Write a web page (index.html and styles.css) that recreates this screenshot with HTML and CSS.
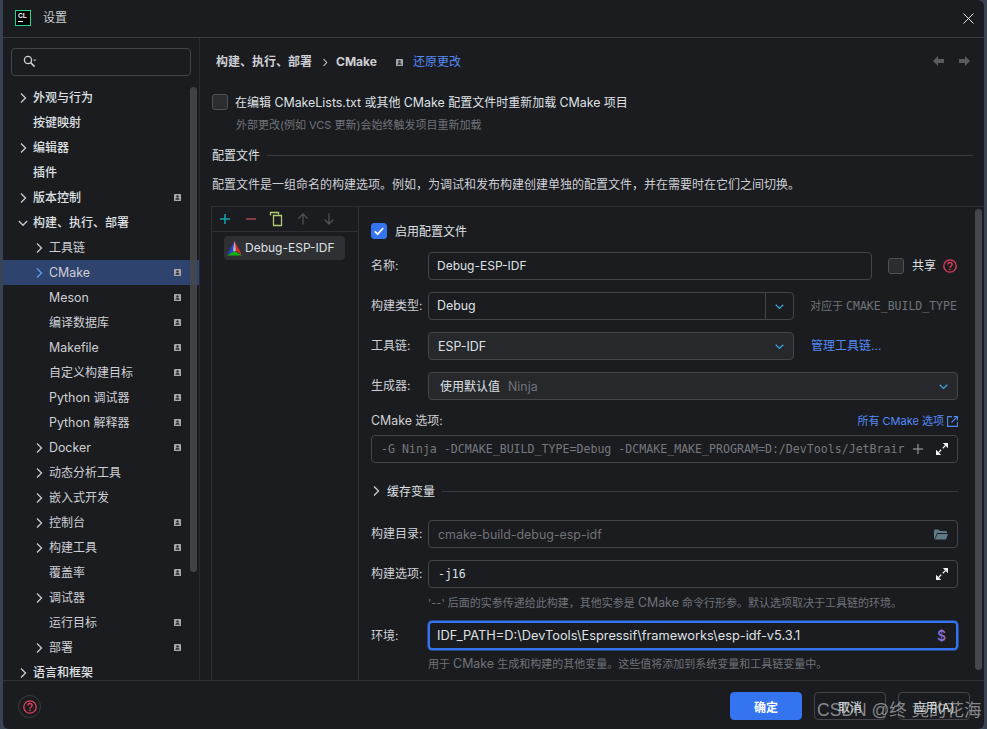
FILE: index.html
```html
<!DOCTYPE html>
<html lang="zh-CN">
<head>
<meta charset="utf-8">
<title>设置</title>
<link rel="stylesheet" href="styles.css">
</head>
<body>
<svg class="defs" width="0" height="0">
  <symbol id="cr" viewBox="0 0 10 10"><path d="M3 .5 7.5 5 3 9.5" fill="none" stroke="currentColor" stroke-width="1.4"/></symbol>
  <symbol id="cd" viewBox="0 0 10 10"><path d="M.8 3 5 7.2 9.2 3" fill="none" stroke="currentColor" stroke-width="1.4"/></symbol>
  <symbol id="pf" viewBox="0 0 7 7"><rect width="7" height="7" rx=".6" fill="#a4a8ad"/><circle cx="3.5" cy="2.4" r="1.2" fill="#2a2c30"/><path d="M1.4 5.8c0-1.4 1-1.9 2.1-1.9s2.1.5 2.1 1.9z" fill="#2a2c30"/></symbol>
  <symbol id="ex" viewBox="0 0 12 12"><path d="M6.800 0H12V5.200zM0 6.800V12H5.200z" fill="#f4f4f4"/><path d="M9.600 2.400 6.800 5.200M2.400 9.600 5.200 6.800" stroke="#f4f4f4" stroke-width="1.300"/></symbol>
  <symbol id="hp" viewBox="0 0 14 14"><circle cx="7" cy="7" r="6.2" fill="none" stroke="#e5405f" stroke-width="1.3"/><path d="M4.9 5.5C4.9 4.2 5.9 3.5 7 3.5s2.1.7 2.1 1.9c0 1.7-2.1 1.7-2.1 3.4" fill="none" stroke="#e5405f" stroke-width="1.3"/><circle cx="7" cy="10.4" r=".8" fill="#e5405f"/></symbol>
</svg>

<div class="dialog">
  <header class="titlebar">
    <div class="logo"><span class="logo-text">CL</span><i class="logo-bar"></i></div>
    <span class="title">设置</span>
    <svg class="close" width="11" height="11" viewBox="0 0 11 11"><path d="M.5.5l10 10M10.5.5l-10 10" stroke="#e8e8e8" stroke-width="1"/></svg>
  </header>

  <div class="content">
    <aside class="sidebar">
      <div class="search">
        <svg width="14" height="14" viewBox="0 0 14 14"><circle cx="5" cy="5" r="3.6" fill="none" stroke="#d0d2d6" stroke-width="1.3"/><path d="M7.6 7.6l4 4" stroke="#d0d2d6" stroke-width="1.5"/><path d="M10 4.5h3.4L11.7 6.500z" fill="#a0a3a8"/></svg>
      </div>
      <nav class="tree">
        <div class="row top"><svg class="chev"><use href="#cr"/></svg><span>外观与行为</span></div>
        <div class="row top"><i class="nochev"></i><span>按键映射</span></div>
        <div class="row top"><svg class="chev"><use href="#cr"/></svg><span>编辑器</span></div>
        <div class="row top"><i class="nochev"></i><span>插件</span></div>
        <div class="row top"><svg class="chev"><use href="#cr"/></svg><span>版本控制</span><svg class="pf"><use href="#pf"/></svg></div>
        <div class="row top"><svg class="chev"><use href="#cd"/></svg><span>构建、执行、部署</span></div>
        <div class="row sub"><svg class="chev"><use href="#cr"/></svg><span>工具链</span></div>
        <div class="row sub selected"><svg class="chev"><use href="#cr"/></svg><span class="l">CMake</span><svg class="pf"><use href="#pf"/></svg></div>
        <div class="row sub"><i class="nochev"></i><span class="l">Meson</span><svg class="pf"><use href="#pf"/></svg></div>
        <div class="row sub"><i class="nochev"></i><span>编译数据库</span><svg class="pf"><use href="#pf"/></svg></div>
        <div class="row sub"><i class="nochev"></i><span class="l">Makefile</span><svg class="pf"><use href="#pf"/></svg></div>
        <div class="row sub"><i class="nochev"></i><span>自定义构建目标</span><svg class="pf"><use href="#pf"/></svg></div>
        <div class="row sub"><i class="nochev"></i><span><span class="l">Python</span> 调试器</span><svg class="pf"><use href="#pf"/></svg></div>
        <div class="row sub"><i class="nochev"></i><span><span class="l">Python</span> 解释器</span><svg class="pf"><use href="#pf"/></svg></div>
        <div class="row sub"><svg class="chev"><use href="#cr"/></svg><span class="l">Docker</span><svg class="pf"><use href="#pf"/></svg></div>
        <div class="row sub"><svg class="chev"><use href="#cr"/></svg><span>动态分析工具</span></div>
        <div class="row sub"><svg class="chev"><use href="#cr"/></svg><span>嵌入式开发</span></div>
        <div class="row sub"><svg class="chev"><use href="#cr"/></svg><span>控制台</span><svg class="pf"><use href="#pf"/></svg></div>
        <div class="row sub"><svg class="chev"><use href="#cr"/></svg><span>构建工具</span><svg class="pf"><use href="#pf"/></svg></div>
        <div class="row sub"><i class="nochev"></i><span>覆盖率</span><svg class="pf"><use href="#pf"/></svg></div>
        <div class="row sub"><svg class="chev"><use href="#cr"/></svg><span>调试器</span></div>
        <div class="row sub"><i class="nochev"></i><span>运行目标</span><svg class="pf"><use href="#pf"/></svg></div>
        <div class="row sub"><svg class="chev"><use href="#cr"/></svg><span>部署</span><svg class="pf"><use href="#pf"/></svg></div>
        <div class="row top"><svg class="chev"><use href="#cr"/></svg><span>语言和框架</span></div>
      </nav>
      <div class="scrollbar side-scroll"></div>
    </aside>

    <main class="main">
      <div class="crumbs">
        <b class="crumb">构建、执行、部署</b>
        <svg class="crumb-sep" width="6" height="9" viewBox="0 0 6 9"><path d="M1.500 1l3.200 3.500L1.500 8" fill="none" stroke="#c8cacd" stroke-width="1.100"/></svg>
        <b class="crumb latin">CMake</b>
        <svg class="pf crumb-pf"><use href="#pf"/></svg>
        <a class="link revert">还原更改</a>
        <svg class="nav-arrows" width="37" height="10" viewBox="0 0 37 10"><path d="M0 5l5-5v3h6v4H5v3zM37 5l-5-5v3h-6v4h6v3z" fill="#585b5f"/></svg>
      </div>

      <div class="intro">
        <label class="check-row"><i class="box"></i><span>在编辑 <span class="l">CMakeLists.txt</span> 或其他 <span class="l">CMake</span> 配置文件时重新加载 <span class="l">CMake</span> 项目</span></label>
        <p class="hint intro-hint">外部更改(例如 VCS 更新)会始终触发项目重新加载</p>
        <div class="section"><span>配置文件</span><i class="rule"></i></div>
        <p class="desc">配置文件是一组命名的构建选项。例如，为调试和发布构建创建单独的配置文件，并在需要时在它们之间切换。</p>
      </div>

      <div class="panel">
        <div class="profiles">
          <div class="toolbar">
            <svg width="122" height="16" viewBox="0 0 122 16">
              <path d="M1 8h10M6 3v10" stroke="#16a2ad" stroke-width="1.500"/>
              <path d="M27 8h10" stroke="#a8434a" stroke-width="1.500"/>
              <path d="M51.500 4.500v-3h8v2M54.500 4.500h8v10h-8z" fill="none" stroke="#b2cc76" stroke-width="1.300"/>
              <path d="M84 13.500V3M79.500 7.500 84 3l4.500 4.500M110 2.500V13M105.500 8.500 110 13l4.500-4.500" fill="none" stroke="#4e5156" stroke-width="1.300"/>
            </svg>
          </div>
          <div class="profile">
            <svg width="15" height="15" viewBox="0 0 15 15">
              <path d="M7.500 0 0 14l7.500-4z" fill="#2b3fd0"/>
              <path d="M7.500 0 15 14 7.500 9z" fill="#d62b2b"/>
              <path d="M0 14.500 7.500 10 15 14.500z" fill="#16b016"/>
              <path d="M7.500 0 6 9.500 7.500 10.500 9 9.500z" fill="#b8b8b8"/>
            </svg>
            <span class="l profile-name">Debug-ESP-IDF</span>
          </div>
        </div>

        <form class="form">
          <label class="check-row enable"><i class="box checked"><svg width="12" height="12" viewBox="0 0 12 12"><path d="M1.800 6.300 4.700 9.200 10.200 3" fill="none" stroke="#fff" stroke-width="1.800"/></svg></i><span>启用配置文件</span></label>

          <div class="frow first">
            <span class="flabel">名称:</span>
            <div class="field w444 tight"><span class="l profile-name">Debug-ESP-IDF</span></div>
            <i class="box share-box"></i><span class="share">共享</span>
            <svg class="help" width="14" height="14"><use href="#hp"/></svg>
          </div>
          <div class="frow">
            <span class="flabel">构建类型:</span>
            <div class="field w366 split tight"><span class="l">Debug</span><span class="arrow-cell"><svg class="cchev"><use href="#cd"/></svg></span></div>
            <span class="hint side-hint">对应于 <span class="mono">CMAKE_BUILD_TYPE</span></span>
          </div>
          <div class="frow">
            <span class="flabel">工具链:</span>
            <div class="field w366 combo"><span class="l drop">ESP-IDF</span><svg class="cchev"><use href="#cd"/></svg></div>
            <a class="link manage">管理工具链...</a>
          </div>
          <div class="frow">
            <span class="flabel">生成器:</span>
            <div class="field wfull combo gen"><span class="drop">使用默认值<span class="l dim">Ninja</span></span><svg class="cchev"><use href="#cd"/></svg></div>
          </div>

          <div class="between opt-label">
            <span><span class="l">CMake</span> 选项:</span>
            <a class="link opt-link">所有 CMake 选项<svg class="ext" width="11" height="11" viewBox="0 0 11 11"><path d="M5 .6H.6v9.800h9.800V6M6.500.6h3.900v3.900M10.200.8 4.500 6.500" fill="none" stroke="#4f8bea" stroke-width="1.100"/></svg></a>
          </div>
          <div class="field full-line opts">
            <span class="mono clip">-G Ninja -DCMAKE_BUILD_TYPE=Debug -DCMAKE_MAKE_PROGRAM=D:/DevTools/JetBrair</span>
            <svg class="plus" width="10" height="10" viewBox="0 0 10 10"><path d="M0 5h10M5 0v10" stroke="#7e8186" stroke-width="1.500"/></svg>
            <svg class="expand" width="12" height="12"><use href="#ex"/></svg>
          </div>

          <div class="section cache">
            <svg class="chev cache-chev"><use href="#cr"/></svg><span>缓存变量</span><i class="rule"></i>
          </div>

          <div class="frow dir-row">
            <span class="flabel">构建目录:</span>
            <div class="field wfull between"><span class="l dim drop">cmake-build-debug-esp-idf</span>
              <svg width="14" height="11" viewBox="0 0 14 11"><path d="M0 1.500a1 1 0 0 1 1-1h3.500L6 2h6a1 1 0 0 1 1 1v1H3L1 9 0 10z" fill="#5f7b88"/><path d="M3.400 5H14l-2 5.500H1z" fill="#5f7b88"/></svg></div>
          </div>
          <div class="frow">
            <span class="flabel">构建选项:</span>
            <div class="field wfull between"><span class="mono bright">-j16</span><svg class="expand" width="12" height="12"><use href="#ex"/></svg></div>
          </div>
          <p class="hint field-hint opt-hint">'--' 后面的实参传递给此构建，其他实参是 <span class="l">CMake</span> 命令行形参。默认选项取决于工具链的环境。</p>
          <div class="frow env-row">
            <span class="flabel">环境:</span>
            <div class="field wfull between focus"><span class="l env-value">IDF_PATH=D:\DevTools\Espressif\frameworks\esp-idf-v5.3.1</span><b class="dollar">$</b></div>
          </div>
          <p class="hint field-hint">用于 <span class="l">CMake</span> 生成和构建的其他变量。这些值将添加到系统变量和工具链变量中。</p>

          <div class="scrollbar form-scroll"></div>
        </form>
      </div>
    </main>
  </div>

  <footer class="footer">
    <span class="help-ring"><svg width="14" height="14"><use href="#hp"/></svg></span>
    <div class="buttons">
      <button class="btn primary" type="button">确定</button>
      <button class="btn" type="button">取消</button>
      <button class="btn" type="button">应用(A)</button>
    </div>
  </footer>
</div>

<div class="watermark">CSDN @终 竟的花海</div>
</body>
</html>
```

FILE: styles.css
```css
* { box-sizing: border-box; }
html, body { margin: 0; height: 100%; }
body {
  background: #3a4352;
  overflow: hidden;
  position: relative;
  font: 12px/16px Inter, "Noto Sans CJK SC", sans-serif;
  color: #dfe1e5;
}
.defs { position: absolute; }
.l { font-size: 12.400px; }
.profile-name { font-size: 12px; }
.env-value { font-size: 12.800px; }
.mono { font-family: "DejaVu Sans Mono", monospace; font-size: 11.600px; }
.bright { color: #dfe1e5; font-size: 11.500px; }
.dim { color: #6f737a; }
.drop { padding-top: 1px; }
p { margin: 0; }

.dialog {
  margin-left: 3px;
  width: 981px;
  height: 729px;
  display: flex;
  flex-direction: column;
  background: #1b1c1f;
  border-radius: 0 6px 6px 6px;
}

/* title bar */
.titlebar {
  height: 38px;
  flex: none;
  border-bottom: 1px solid #393b40;
  display: flex;
  align-items: center;
  padding: 0 10px 1px 12px;
}
.logo {
  width: 16px;
  height: 16px;
  border: 1px solid #21d789;
  background: #000;
  display: flex;
  flex-direction: column;
  padding: 1px 0 0 2px;
}
.logo-text { font: bold 6.500px/7px "Liberation Sans", sans-serif; color: #fff; }
.logo-bar { display: block; width: 5px; height: 1px; background: #fff; margin-top: 2px; }
.title { margin-left: 12px; color: #c9ccd1; }
.close { margin-left: auto; }

/* layout */
.content { flex: 1; display: flex; min-height: 0; }
.sidebar {
  width: 197px;
  flex: none;
  border-right: 1px solid #2a2b2f;
  position: relative;
  overflow: hidden;
}
.main { flex: 1; min-width: 0; display: flex; flex-direction: column; }

/* sidebar */
.search {
  height: 28px;
  margin: 10px 8px 9px;
  border: 1px solid #43454a;
  border-radius: 4px;
  display: flex;
  align-items: center;
  padding-left: 11px;
}
.row { height: 25px; display: flex; align-items: center; position: relative; color: #ced0d6; }
.row.top { padding-left: 15px; color: #dfe1e5; font-weight: 500; }
.row.sub { padding-left: 31px; }
.row.selected { background: #2e436e; }
.row.selected .chev { color: #5b9bf0; }
.chev { width: 10px; height: 10px; margin-right: 5px; color: #c4c6ca; flex: none; }
.nochev { width: 10px; margin-right: 5px; flex: none; }
.pf { position: absolute; left: 171px; top: 9px; width: 7px; height: 7px; }
.scrollbar { position: absolute; width: 7px; border-radius: 4px; background: #45474b; }
.side-scroll { left: 187px; top: 49px; height: 485px; opacity: .9; }

/* header */
.crumbs { height: 46px; flex: none; display: flex; align-items: center; padding: 2px 14px 0 16px; }
.crumb { font-weight: 700; color: #ced0d6; }
.crumb-sep { margin: 0 8px 0 10px; }
.crumb-pf { position: static; margin: 0 10px 0 19px; }
.link { color: #548af7; }
.nav-arrows { margin-left: auto; margin-top: -2px; }

.intro { padding: 10px 0 0 12px; flex: none; }
.check-row { display: flex; align-items: center; gap: 7px; height: 16px; color: #dfe1e5; }
.check-row > span { padding-top: 1px; }
.enable { gap: 8px; }
.box {
  display: flex;
  align-items: center;
  justify-content: center;
  width: 16px;
  height: 16px;
  flex: none;
  border: 1px solid #4e5157;
  border-radius: 3px;
  background: #2b2d30;
}
.box.checked { background: #3574f0; border-color: #3574f0; }
.hint { color: #6f737a; font-size: 11px; }
.intro-hint { margin-top: 7px; padding-left: 24px; }
.section { display: flex; align-items: center; gap: 7px; height: 16px; }
.section > span { padding-top: 1px; }
.intro .section { margin: 14px 11px 0 0; }
.rule { flex: 1; height: 1px; background: #393b40; }
.desc { margin-top: 14px; color: #ced0d6; }

/* panel */
.panel {
  flex: 1;
  margin: 13px 0 0 11px;
  border-top: 1px solid #2f3034;
  border-left: 1px solid #2f3034;
  display: flex;
  min-height: 0;
}
.profiles { width: 147px; flex: none; border-right: 1px solid #2f3034; }
.toolbar { height: 25px; border-bottom: 1px solid #2f3034; padding: 4px 0 0 7px; }
.profile {
  height: 24px;
  width: 121px;
  margin: 4px 0 0 12px;
  background: #2e3034;
  border-radius: 4px;
  display: flex;
  align-items: center;
  gap: 3px;
  padding-left: 3px;
}

/* form */
.form { flex: 1; position: relative; padding: 16px 0 0 12px; display: flex; flex-direction: column; min-width: 0; }
.form-scroll { left: 616px; top: 2px; height: 461px; }
.frow { display: flex; align-items: center; margin-top: 12px; }
.frow.first { margin-top: 13px; }
.flabel { width: 57px; flex: none; color: #ced0d6; }
.field {
  height: 28px;
  flex: none;
  border: 1px solid #43454a;
  border-radius: 4px;
  display: flex;
  align-items: center;
  padding: 0 9px;
  color: #dfe1e5;
}
.tight { padding-left: 8px; }
.w444 { width: 444px; }
.w366 { width: 366px; }
.wfull { width: 530px; }
.full-line { width: 587px; }
.between { display: flex; align-items: center; justify-content: space-between; }
.share-box { margin-left: 16px; }
.share { margin-left: 8px; }
.help { margin-left: 7px; }

.split { padding-right: 0; justify-content: space-between; }
.arrow-cell { width: 28px; height: 26px; border-left: 1px solid #43454a; display: flex; align-items: center; justify-content: center; }
.cchev { width: 9px; height: 9px; color: #3fa4dc; }
.combo { background: #26282c; justify-content: space-between; padding: 0 9px 0 9px; }
.gen { padding-left: 11px; }
.gen .dim { margin-left: 8px; }
.side-hint { margin-left: 16px; white-space: nowrap; }
.side-hint .mono { font-size: 11.500px; }
.manage { margin-left: 17px; }

.opt-label { margin-top: 13px; width: 587px; height: 16px; color: #ced0d6; }
.opt-link { white-space: nowrap; font-size: 11px; }
.ext { margin-left: 3px; vertical-align: -2px; }
.opts { margin-top: 6px; color: #75787e; padding-right: 9px; }
.clip { width: 524px; overflow: hidden; white-space: nowrap; flex: none; }
.plus { margin-left: 8px; flex: none; }
.expand { margin-left: auto; flex: none; }
.cache { margin-top: 20px; width: 587px; gap: 7px; }
.cache-chev { margin-right: -1px; }
.dir-row { margin-top: 21px; }
.field-hint { margin: 6px 0 0 57px; color: #6f737a; }
.opt-hint { margin-top: 7px; }
.env-row { margin-top: 10px; }
.focus { border: 2px solid #3574f0; box-shadow: 0 0 0 .5px #3574f0; height: 29px; padding-left: 7px; }
.dollar { color: #8c6fd8; font: 500 14px "Inter", sans-serif; margin-right: 1px; }

/* footer */
.footer {
  height: 49px;
  flex: none;
  border-top: 1px solid #2f3034;
  display: flex;
  align-items: flex-start;
  justify-content: space-between;
  padding: 11px 14px 0 15px;
}
.help-ring {
  width: 23px;
  height: 23px;
  margin-top: 3px;
  border: 1px solid #393b40;
  border-radius: 50%;
  display: flex;
  align-items: center;
  justify-content: center;
}
.buttons { display: flex; gap: 12px; }
.btn {
  width: 72px;
  height: 28px;
  border: 1px solid #43454a;
  border-radius: 4px;
  background: transparent;
  color: #dfe1e5;
  font: 12px Inter, "Noto Sans CJK SC", sans-serif;
  padding: 0;
}
.btn.primary { background: #3574f0; border-color: #3574f0; color: #fff; font-weight: 700; }

.watermark {
  position: absolute;
  left: 817px;
  top: 698px;
  font: 17.500px/24px "Liberation Sans", "Noto Sans CJK SC", sans-serif;
  color: rgba(205, 207, 210, .62);
  white-space: nowrap;
}
```
